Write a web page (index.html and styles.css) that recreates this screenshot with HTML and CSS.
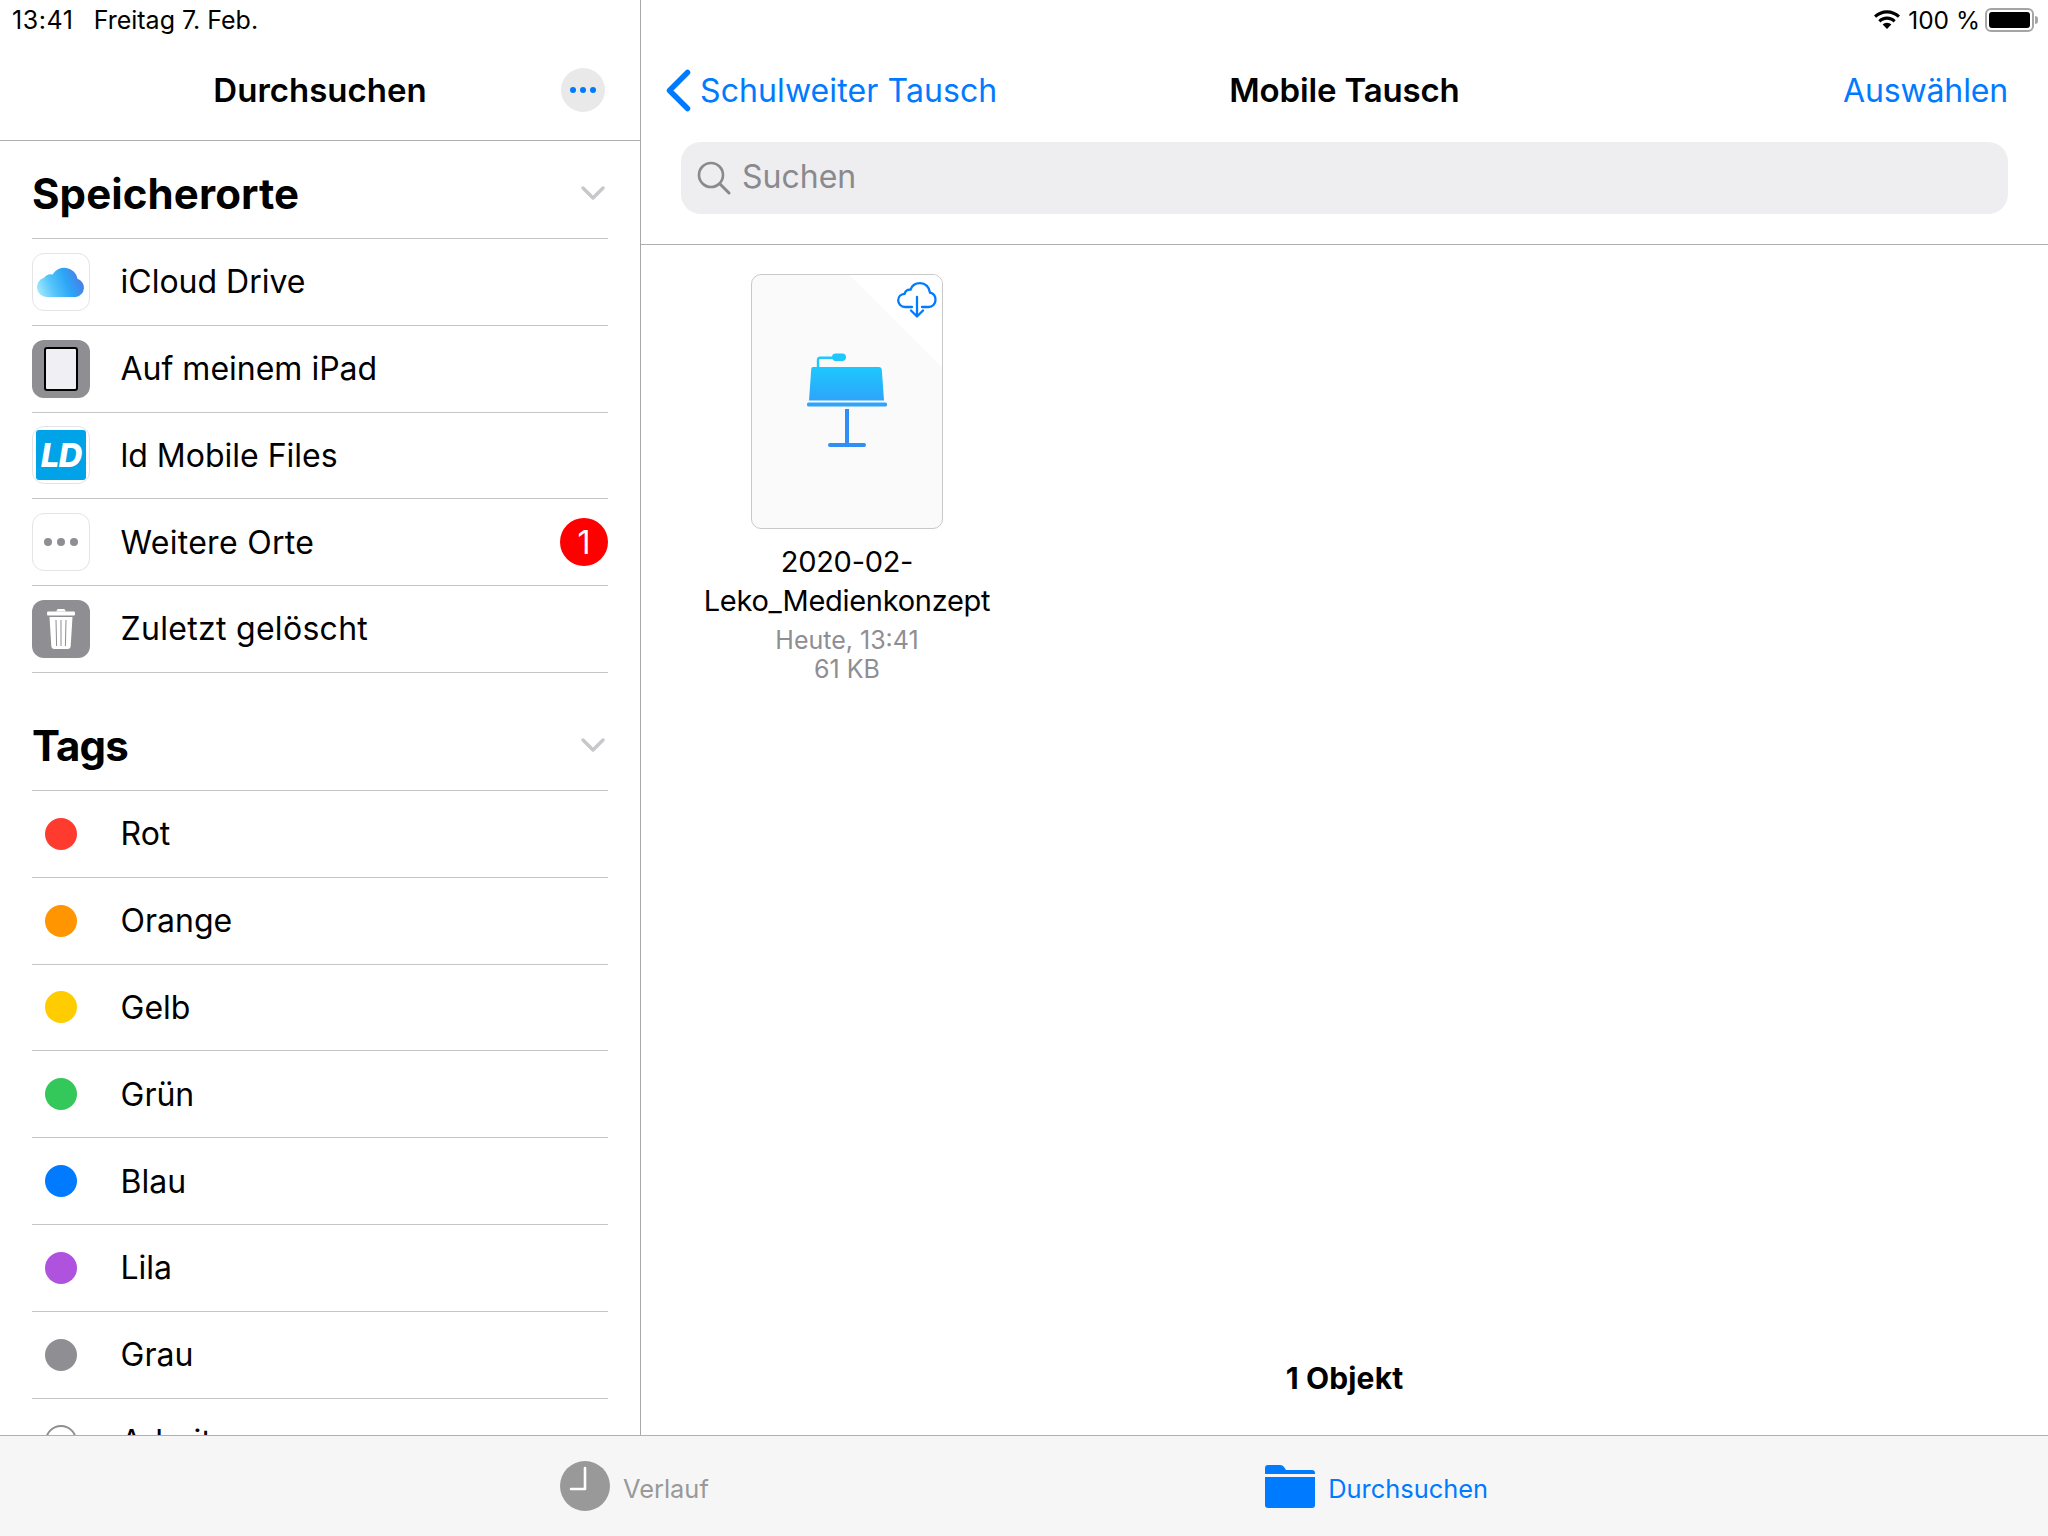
FILE: index.html
```html
<!DOCTYPE html>
<html lang="de">
<head>
<meta charset="utf-8">
<title>Dateien</title>
<link rel="stylesheet" href="styles.css">
</head>
<body>
<div class="app">
  <aside class="sidebar">
    <div class="status status-left"><span class="time">13:41</span><span>Freitag 7. Feb.</span></div>
    <header class="nav side-nav">
      <span></span>
      <h1 class="nav-title">Durchsuchen</h1>
      <button class="more"><i></i><i></i><i></i></button>
    </header>
    <section class="group group-first">
      <div class="group-head">
        <h2>Speicherorte</h2>
        <svg class="chev" width="24" height="14" viewBox="0 0 24 14"><path d="M2 2 12 12 22 2" fill="none" stroke="#c7c7cc" stroke-width="3.400" stroke-linecap="round" stroke-linejoin="round"/></svg>
      </div>
      <div class="row">
        <span class="tile tile-white">
          <svg width="50" height="33" viewBox="0 0 50 33"><defs><linearGradient id="cl" x1="0" y1="0.85" x2="1" y2="0.6"><stop offset="0" stop-color="#a8ecfc"/><stop offset="0.35" stop-color="#55c4fa"/><stop offset="0.68" stop-color="#2ca6f6"/><stop offset="1" stop-color="#4a7ee8"/></linearGradient></defs><path d="M10.500 32A9.800 9.800 0 0 1 8 12.800 8.500 8.500 0 0 1 16.500 9.500 13.500 13.500 0 0 1 41.500 13.800 9.400 9.400 0 0 1 40 32Z" fill="url(#cl)"/></svg>
        </span>
        <span class="label">iCloud Drive</span>
      </div>
      <div class="row">
        <span class="tile tile-gray"><span class="ipad"></span></span>
        <span class="label">Auf meinem iPad</span>
      </div>
      <div class="row">
        <span class="tile tile-white"><span class="ld">LD</span></span>
        <span class="label">ld Mobile Files</span>
      </div>
      <div class="row">
        <span class="tile tile-white tile-dots"><i></i><i></i><i></i></span>
        <span class="label label-wide">Weitere Orte</span>
        <span class="badge">1</span>
      </div>
      <div class="row">
        <span class="tile tile-gray">
          <svg width="30" height="42" viewBox="0 0 30 42"><path d="M10.500 3.500C10.500 1.500 11.500 1 13 1h4c1.500 0 2.500.5 2.500 2.500" fill="#fff"/><rect x="1" y="3.500" width="28" height="4" rx="1" fill="#fff"/><path d="M3.500 9h23l-1.800 29c-.1 2-1.200 3-3 3H8.300c-1.800 0-2.900-1-3-3Z" fill="#fff"/><path d="M10 12l.6 26M15 12v26M20 12l-.6 26" stroke="#8e8e93" stroke-width="1" fill="none"/></svg>
        </span>
        <span class="label label-wide">Zuletzt gelöscht</span>
      </div>
    </section>
    <section class="group">
      <div class="group-head">
        <h2 class="h-tags">Tags</h2>
        <svg class="chev" width="24" height="14" viewBox="0 0 24 14"><path d="M2 2 12 12 22 2" fill="none" stroke="#c7c7cc" stroke-width="3.400" stroke-linecap="round" stroke-linejoin="round"/></svg>
      </div>
      <div class="row"><span class="tag-slot"><i class="dot dot-red"></i></span><span class="label">Rot</span></div>
      <div class="row"><span class="tag-slot"><i class="dot dot-orange"></i></span><span class="label">Orange</span></div>
      <div class="row"><span class="tag-slot"><i class="dot dot-yellow"></i></span><span class="label">Gelb</span></div>
      <div class="row"><span class="tag-slot"><i class="dot dot-green"></i></span><span class="label">Grün</span></div>
      <div class="row"><span class="tag-slot"><i class="dot dot-blue"></i></span><span class="label">Blau</span></div>
      <div class="row"><span class="tag-slot"><i class="dot dot-purple"></i></span><span class="label">Lila</span></div>
      <div class="row"><span class="tag-slot"><i class="dot dot-gray"></i></span><span class="label">Grau</span></div>
      <div class="row"><span class="tag-slot"><i class="dot dot-hollow"></i></span><span class="label">Arbeit</span></div>
    </section>
  </aside>

  <main class="main">
    <div class="status status-right">
      <svg width="28" height="20" viewBox="0 0 28 20"><path d="M14 3.500c4.200 0 8 1.600 10.900 4.300L27 5.600C23.500 2.200 19 .3 14 .3S4.500 2.200 1 5.600l2.100 2.200C6 5.100 9.800 3.500 14 3.500Z"/><path d="M14 9.800c2.500 0 4.800 1 6.500 2.600l2.200-2.200C20.400 8 17.300 6.600 14 6.600S7.600 8 5.300 10.200l2.200 2.200C9.200 10.800 11.500 9.800 14 9.800Z"/><path d="M14 12.800c-1.700 0-3.200.7-4.300 1.700L14 19l4.300-4.500c-1.100-1-2.600-1.700-4.300-1.700Z"/></svg>
      <span class="pct">100 %</span>
      <span class="battery"><i></i></span>
    </div>
    <header class="nav main-nav">
      <a class="back">
        <svg width="26" height="43" viewBox="0 0 26 43"><path d="M22.500 3.500 4.500 21.500 22.500 39.500" fill="none" stroke="#007aff" stroke-width="5.500" stroke-linecap="round" stroke-linejoin="round"/></svg>
        <span>Schulweiter Tausch</span>
      </a>
      <h1 class="nav-title nav-title-tight">Mobile Tausch</h1>
      <a class="select">Auswählen</a>
    </header>
    <div class="search-wrap">
      <div class="search">
        <svg width="34" height="34" viewBox="0 0 34 34"><circle cx="14" cy="14" r="12" fill="none" stroke="#8a8a8e" stroke-width="2.600"/><path d="M23 23 32 32" stroke="#8a8a8e" stroke-width="3" stroke-linecap="round"/></svg>
        <span class="search-text">Suchen</span>
      </div>
    </div>
    <div class="content">
      <article class="file">
        <div class="thumb">
          <span class="fold"></span>
          <svg class="cloud" width="40" height="36" viewBox="0 0 40 36"><path d="M15 25H8C4 25 1.200 22 1.200 18.300 1.200 14.500 4 12 7.500 11.800 8.500 9 10.800 7.400 13.500 7.700 15 3.500 19 1.200 23 1.200c5.500 0 9.500 4 10 9.500 3.300.8 5.500 3.700 5.500 7.200 0 4-3 7.100-7 7.100h-6.500" fill="none" stroke="#007aff" stroke-width="2.300" stroke-linecap="round"/><path d="M20 15v19M14 28.500 20 34.500 26 28.500" fill="none" stroke="#007aff" stroke-width="2.300" stroke-linecap="round" stroke-linejoin="round"/></svg>
          <svg class="keynote" width="82" height="96" viewBox="0 0 82 96"><defs><linearGradient id="kn" x1="0" y1="0" x2="0" y2="1"><stop offset="0" stop-color="#1dc8fd"/><stop offset="1" stop-color="#2ea4fb"/></linearGradient></defs><path d="M12 14.500V7c0-1.500.8-2.300 2.300-2.300H27" fill="none" stroke="#1dc8fd" stroke-width="2.400"/><rect x="26" y="0.500" width="14" height="7.500" rx="3.700" fill="#1dc8fd"/><path d="M7 14h66c1.600 0 2.600 1 2.800 2.500L78 47.500H3L5.200 16.500C5.300 15 5.500 14 7 14Z" fill="url(#kn)"/><rect x="1" y="49.500" width="80" height="4" rx="1.500" fill="#2ea4fb"/><rect x="39" y="56" width="4" height="35" fill="#2f8ff5"/><rect x="22" y="90" width="38" height="4" rx="2" fill="#2f8ff5"/></svg>
        </div>
        <div class="file-name">2020-02-<br>Leko_Medienkonzept</div>
        <div class="file-meta">Heute, 13:41<br>61 KB</div>
      </article>
    </div>
    <footer class="count">1 Objekt</footer>
  </main>

  <nav class="tabbar">
    <div class="tab tab-off">
      <svg width="50" height="50" viewBox="0 0 50 50"><circle cx="25" cy="25" r="25" fill="#999"/><path d="M25 7v21H11" fill="none" stroke="#fff" stroke-width="2.600" stroke-linecap="round" stroke-linejoin="round"/></svg>
      <span>Verlauf</span>
    </div>
    <div class="tab tab-on">
      <svg width="50" height="43" viewBox="0 0 50 43"><path d="M0 9V3C0 1 1 0 3 0h12c2 0 3 .8 4 2l2 3h26c2 0 3 1 3 3v1Z" fill="#007aff"/><path d="M0 12h50v28c0 2-1 3-3 3H3c-2 0-3-1-3-3Z" fill="#007aff"/></svg>
      <span>Durchsuchen</span>
    </div>
  </nav>
</div>
</body>
</html>
```
FILE: styles.css
```css
* { box-sizing: border-box; }
html, body { margin: 0; padding: 0; background: #fff; }
body { font-family: Inter, "Liberation Sans", sans-serif; color: #000; width: 2048px; height: 1536px; overflow: hidden; }
h1, h2 { margin: 0; }
i { display: block; }

.app { display: grid; grid-template-columns: 641px 1fr; grid-template-rows: 1435px 101px; width: 2048px; height: 1536px; }

.sidebar { border-right: 1px solid #a8a8a8; overflow: hidden; }
.main { display: flex; flex-direction: column; min-width: 0; }

.status { height: 40px; display: flex; align-items: center; font-size: 25px; }
.status-left { padding-left: 12px; gap: 20px; }
.status-left .time { letter-spacing: 0.600px; }
.status-right { justify-content: flex-end; padding-right: 14px; font-size: 24.500px; }
.status-right .pct { margin-left: 7px; margin-right: 5px; }

.battery { width: 49px; height: 24px; border: 2px solid #a5a5a5; border-radius: 6px; padding: 2px; position: relative; }
.battery i { width: 100%; height: 100%; background: #000; border-radius: 3px; }
.battery::after { content: ""; position: absolute; right: -6px; top: 6px; width: 3px; height: 8px; background: #a5a5a5; border-radius: 0 3px 3px 0; }

.nav { height: 100px; display: grid; align-items: center; }
.nav-title { font-size: 33px; font-weight: 600; text-align: center; white-space: nowrap; }
.nav-title-tight { letter-spacing: -0.150px; }

.side-nav { height: 101px; grid-template-columns: 1fr auto 1fr; border-bottom: 1px solid #b0b0b0; padding-right: 35px; padding-left: 35px; }
.more { justify-self: end; width: 44px; height: 44px; border: 0; padding: 0; border-radius: 50%; background: #e9e9ea; display: flex; align-items: center; justify-content: center; gap: 4px; }
.more i { width: 6px; height: 6px; border-radius: 50%; background: #007aff; }

.group { padding: 0 32px; }
.group-first { margin-top: 7px; }
.group-first .row { height: 86.750px; }
.group-head { height: 91px; display: flex; align-items: center; justify-content: space-between; border-bottom: 1px solid #c6c6c8; }
.group + .group { margin-top: 27.250px; }
.group-head h2 { font-size: 42px; font-weight: 700; letter-spacing: 0.1px; }
.group-head .h-tags { letter-spacing: -0.900px; }
.chev { margin-right: 3px; }

.row { height: 86.800px; display: flex; align-items: center; border-bottom: 1px solid #c6c6c8; }
.label { font-size: 32px; margin-left: 30.500px; flex: 1; white-space: nowrap; }
.label-wide { letter-spacing: 0.300px; }

.tile { width: 58px; height: 58px; border-radius: 12px; display: flex; align-items: center; justify-content: center; flex: none; }
.tile-white { border: 1px solid #e4e4e6; background: #fff; }
.tile-gray { background: #8e8e93; }
.ipad { width: 34px; height: 44px; background: #efeff4; border: 2px solid #000; border-radius: 3px; }
.ld { width: 50px; height: 50px; background: #00a2e8; border-radius: 3px; color: #fff; font-size: 33px; font-weight: 800; font-style: italic; display: flex; align-items: center; justify-content: center; letter-spacing: -1px; }
.tile-dots { gap: 5px; }
.tile-dots i { width: 8px; height: 8px; border-radius: 50%; background: #8e8e93; }
.badge { width: 48px; height: 48px; border-radius: 50%; background: #fe0000; color: #fff; font-size: 32px; display: flex; align-items: center; justify-content: center; }

.tag-slot { width: 58px; display: flex; justify-content: center; flex: none; }
.dot { width: 32px; height: 32px; border-radius: 50%; }
.dot-red { background: #ff3b30; }
.dot-orange { background: #ff9500; }
.dot-yellow { background: #ffcc00; }
.dot-green { background: #34c759; }
.dot-blue { background: #007aff; }
.dot-purple { background: #af52de; }
.dot-gray { background: #8e8e93; }
.dot-hollow { border: 2px solid #8e8e93; }

.main-nav { grid-template-columns: 1fr auto 1fr; padding: 0 40px; }
.back { display: flex; align-items: center; gap: 9px; margin-left: -16px; color: #007aff; font-size: 32px; letter-spacing: 0.100px; white-space: nowrap; }
.select { justify-self: end; color: #007aff; font-size: 32px; letter-spacing: -0.150px; }

.search-wrap { padding: 2px 40px 30px; border-bottom: 1px solid #b0b0b0; }
.search { height: 72px; background: #eeeef0; border-radius: 20px; display: flex; align-items: center; padding-left: 16px; gap: 11px; color: #8a8a8e; font-size: 32px; }
.search-text { margin-top: -3px; }

.content { flex: 1; padding: 29px 0 0 56px; }
.file { width: 300px; text-align: center; }
.thumb { position: relative; width: 192px; height: 255px; margin: 0 auto; background: #fafafa; border: 1px solid #c9c9c9; border-radius: 10px; overflow: hidden; display: flex; align-items: center; justify-content: center; }
.fold { position: absolute; top: 0; right: 0; width: 92px; height: 92px; background: linear-gradient(to top right, #fafafa 50%, #fff 50%); }
.keynote { position: relative; top: -1px; }
.cloud { position: absolute; top: 7px; right: 5px; }
.file-name { font-size: 29px; letter-spacing: -0.280px; line-height: 39px; margin-top: 13px; }
.file-meta { font-size: 25px; line-height: 29px; color: #8e8e93; margin-top: 6px; }

.count { height: 114px; display: flex; align-items: center; justify-content: center; font-size: 30px; font-weight: 700; letter-spacing: 0.150px; }

.tabbar { grid-column: 1 / -1; background: #f6f6f6; border-top: 1px solid #b0b0b0; display: flex; justify-content: center; align-items: center; gap: 556.500px; }
.tab { display: flex; align-items: center; font-size: 25.400px; gap: 13px; }
.tab span { margin-top: 5px; }
.tab-off { color: #999; }
.tab-on { color: #007aff; }
```
